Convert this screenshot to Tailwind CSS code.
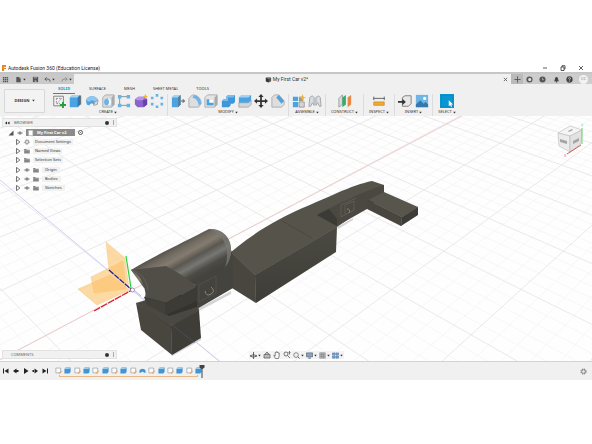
<!DOCTYPE html>
<html lang="en">
<head>
    <meta charset="UTF-8">
    <meta name="viewport" content="width=device-width, initial-scale=1.0">
    <title>Autodesk Fusion 360 (Education License)</title>
    <script src="https://cdn.jsdelivr.net/npm/@tailwindcss/browser@4"></script>
</head>
<body class="bg-white font-['Noto_Sans',sans-serif] text-[4px] leading-[6px] text-[#333]">

<!-- Icon set -->
<svg class="hidden">
    <symbol id="i-sketch" viewBox="0 0 16 16"><path d="M2 2.500h11v11H2z" fill="#f4f4f4" stroke="#777" stroke-width="1"/><path d="M5 5h6M5 5v6h4M11 5L6 11" fill="none" stroke="#888" stroke-dasharray="2 1"/><path d="M12.500 9v7M9 12.500h7" stroke="#23a03a" stroke-width="2.200"/></symbol>
    <symbol id="i-extrude" viewBox="0 0 16 16"><path d="M2 4l3-3h9v11l-3 3H2z" fill="#4da3e0"/><path d="M2 4l3-3h9l-3 3z" fill="#a5d3f3"/><path d="M11 4l3-3v11l-3 3z" fill="#2d78b4"/><path d="M14.500 2v10" stroke="#555"/></symbol>
    <symbol id="i-revolve" viewBox="0 0 16 16"><path d="M1 7C3 1 13 1 15 7l-1 5-4 1c0-3-4-3-5 0l-3-1z" fill="#4da3e0"/><path d="M1 7C3 1 13 1 15 7l-4 2c-1-2-5-2-6 0z" fill="#8cc8f0"/><path d="M11 9l4-2-1 5-4 1z" fill="#d8d8d8" stroke="#888" stroke-width=".6"/></symbol>
    <symbol id="i-hole" viewBox="0 0 16 16"><path d="M2 4l3-3h10v11l-3 3H2z" fill="#dcdcdc" stroke="#999" stroke-width=".8"/><path d="M12 4l3-3v11l-3 3z" fill="#aaa"/><circle cx="7.500" cy="9" r="4" fill="#6db5e8"/><path d="M7.500 5a4 4 0 010 8 6 6 0 000-8" fill="#fff"/></symbol>
    <symbol id="i-pattern" viewBox="0 0 16 16"><path d="M3 3h10M3 3v10h10" fill="none" stroke="#888" stroke-width="1"/><path d="M1 1h4v4H1zM11 1h4v4h-4zM1 11h4v4H1zM11 11h4v4h-4z" fill="#69b2e4"/></symbol>
    <symbol id="i-form" viewBox="0 0 16 16"><path d="M1 6l4-3h8l2 3v6l-4 3H4l-3-3z" fill="#8c62cb"/><path d="M1 6l4-3h8l-3 4H4z" fill="#b794ea"/><path d="M10 7l5-1v6l-4 3z" fill="#6841a8"/><path d="M13 0l1 2 2 1-2 1-1 2-1-2-2-1 2-1z" fill="#f6b32c"/></symbol>
    <symbol id="i-dots" viewBox="0 0 16 16"><g fill="#69b2e4"><path d="M6.500 0h3v3h-3zM12 3h3v3h-3zM12 10h3v3h-3zM6.500 13h3v3h-3zM1 10h3v3H1zM1 3h3v3H1z"/></g></symbol>
    <symbol id="i-press" viewBox="0 0 16 16"><path d="M1 4l3-3h7v11l-3 3H1z" fill="#4da3e0"/><path d="M1 4l3-3h7L8 4z" fill="#a5d3f3"/><path d="M8 4l3-3v11l-3 3z" fill="#5c7d96"/><path d="M11.500 8H15M13.500 6l2 2-2 2" fill="none" stroke="#333"/></symbol>
    <symbol id="i-fillet" viewBox="0 0 16 16"><path d="M1 5l4-4c6 0 10 4 10 10l-3 4H1z" fill="#dedede" stroke="#999" stroke-width=".8"/><path d="M5 4l2-3c5 1 8 5 8 10l-3 2c0-5-3-8-7-9z" fill="#6db5e8"/></symbol>
    <symbol id="i-shell" viewBox="0 0 16 16"><path d="M1 4l3-3h11v11l-3 3H1z" fill="#e4e4e4" stroke="#999" stroke-width=".8"/><path d="M3 6h8v7H3z" fill="#4da3e0"/><path d="M6 6h5v4H6z" fill="#fff"/><path d="M12 4l3-3v11l-3 3z" fill="#aaa"/></symbol>
    <symbol id="i-combine" viewBox="0 0 16 16"><path d="M1 8l2-2h3V3l2-2h8v8l-2 2h-3v2l-2 2H1z" fill="#3f97da"/><path d="M1 8l2-2h3V3l2-2h8l-2 3H8v4z" fill="#7bbdec"/></symbol>
    <symbol id="i-split" viewBox="0 0 16 16"><path d="M1 10h11l3-3v5l-3 3H1z" fill="#d5d5d5" stroke="#999" stroke-width=".8"/><path d="M1 4l3-3h11v6l-3 3H1z" fill="#4da3e0"/><path d="M1 4l3-3h11l-3 3z" fill="#a5d3f3"/></symbol>
    <symbol id="i-move" viewBox="0 0 16 16"><path d="M8 0l3 3.500H9V7h3.500V5L16 8l-3.500 3V9H9v3.500h2L8 16l-3-3.500h2V9H3.500v2L0 8l3.500-3v2H7V3.500H5z" fill="#333"/></symbol>
    <symbol id="i-chamfer" viewBox="0 0 16 16"><path d="M1 4l3-3h5l6 7v4l-3 3H1z" fill="#dedede" stroke="#999" stroke-width=".8"/><path d="M6 4l3-3 6 7-3 3z" fill="#4da3e0"/></symbol>
    <symbol id="i-component" viewBox="0 0 16 16"><path d="M1 3h6v5H1zM1 9h6v6H1z" fill="#4da3e0"/><path d="M8 9h6v6H8z" fill="#d5d5d5" stroke="#777" stroke-width=".7"/><path d="M8 3h5v5H8z" fill="#999"/><path d="M12 0l1 3 3 1-3 1-1 3-1-3-3-1 3-1z" fill="#f6b32c"/></symbol>
    <symbol id="i-joint" viewBox="0 0 16 16"><path d="M2 4l3-2 2 2v9l-2-3-2 4H1zM9 4l3-2 2 2 1 10h-2l-2-4-2 3z" fill="#d9dde0" stroke="#9aa0a6" stroke-width="1"/></symbol>
    <symbol id="i-construct" viewBox="0 0 16 16"><path d="M1 5l4-4v11l-4 3z" fill="#ddd" stroke="#888" stroke-width=".8"/><path d="M5 4l4-3v11l-4 3z" fill="#35ac68"/><path d="M11 4l4-3v11l-4 3z" fill="#e98742"/></symbol>
    <symbol id="i-inspect" viewBox="0 0 16 16"><path d="M2 3v4M14 3v4M2 5h12" stroke="#555" stroke-width="1"/><path d="M2 9h12v4H2z" fill="#f3a72f" stroke="#b57a1c" stroke-width=".6"/></symbol>
    <symbol id="i-insert" viewBox="0 0 16 16"><path d="M5 4l3-2h7v9l-3 3H5z" fill="#e8e8e8" stroke="#777" stroke-width="1"/><path d="M0 8h5V5.500L9 9l-4 3.500V10H0z" fill="#333"/></symbol>
    <symbol id="i-image" viewBox="0 0 16 16"><path d="M1 1h14v14H1z" fill="#6fb6e8"/><path d="M1 12l5-5 4 4 2-2 3 3v3H1z" fill="#3379ad"/><circle cx="11" cy="5" r="1.800" fill="#fff"/></symbol>
    <symbol id="i-select" viewBox="0 0 16 16"><path d="M0 0h16v16H0z" fill="#0a96d2"/><path d="M1.500 1.500h13v13h-13z" fill="none" stroke="#0b7fb5" stroke-width=".8" stroke-dasharray="2 1"/><path d="M10 7v7l1.600-1.500 1 2.300 1.200-.6-1-2.200H15z" fill="#fff"/></symbol>
    <symbol id="i-grid" viewBox="0 0 8 8"><path d="M1 1h1.600v1.600H1zM3.200 1h1.600v1.600H3.200zM5.400 1H7v1.600H5.400zM1 3.200h1.600v1.600H1zM3.200 3.200h1.600v1.600H3.200zM5.400 3.200H7v1.600H5.400zM1 5.400h1.600V7H1zM3.200 5.400h1.600V7H3.200zM5.400 5.400H7V7H5.400z" fill="#555"/></symbol>
    <symbol id="i-file" viewBox="0 0 8 8"><path d="M1.500 1H5l1.500 1.500V7h-5z" fill="#555"/><path d="M5 1v1.500h1.500" stroke="#ccc" stroke-width=".5" fill="none"/></symbol>
    <symbol id="i-save" viewBox="0 0 8 8"><path d="M1 1h6v6H1z" fill="#555"/><path d="M2.300 1.700h3.400v1H2.300zM3 5h2v1.500H3z" fill="#c8c8c8"/></symbol>
    <symbol id="i-undo" viewBox="0 0 8 8"><path d="M3 1.500L1 3.500l2 2M1 3.500h3.500Q7 3.500 7 6.500" fill="none" stroke="#555"/></symbol>
    <symbol id="i-redo" viewBox="0 0 8 8"><path d="M5 1.500l2 2-2 2M7 3.500H3.500Q1 3.500 1 6.500" fill="none" stroke="#888"/></symbol>
    <symbol id="i-cube" viewBox="0 0 8 8"><path d="M1 2l3-1 3 1v4L4 7.500 1 6z" fill="#555"/><path d="M1 2l3 1v4.500L1 6z" fill="#333"/><path d="M1 2l3-1 3 1-3 1z" fill="#999"/></symbol>
    <symbol id="i-eye" viewBox="0 0 8 8"><path d="M.6 4q3.400-4 6.800 0-3.400 4-6.800 0z" fill="#e6e6e6" stroke="#777" stroke-width=".8"/><circle cx="4" cy="4" r="1.200" fill="#666"/></symbol>
    <symbol id="i-folder" viewBox="0 0 8 8"><path d="M.2 1.200h2.700l.8 1h4v5h-7.500z" fill="#858585"/><path d="M.2 3.500h7.500" stroke="#c4c4c4" stroke-width=".5"/></symbol>
    <symbol id="i-gear" viewBox="0 0 8 8"><circle cx="4" cy="4" r="2.900" fill="none" stroke="#777" stroke-width="1.200" stroke-dasharray="1.400 .9"/><circle cx="4" cy="4" r="2" fill="none" stroke="#777" stroke-width=".9"/></symbol>
    <symbol id="i-arrow" viewBox="0 0 8 8"><path d="M2 .5L6.500 4 2 7.500z" fill="#fff" stroke="#444" stroke-width="1"/></symbol>
    <symbol id="i-caret" viewBox="0 0 4 4"><path d="M.3 1h3.400L2 3.400z" fill="#333"/></symbol>
    <symbol id="t-sketch" viewBox="0 0 8 8"><path d="M1 1.200h5.500v5.500H1z" fill="#fbfbfb" stroke="#8a9299" stroke-width=".7"/><path d="M4.500 7.500l3-3" stroke="#eda24f" stroke-width="1.200"/></symbol>
    <symbol id="t-extrude" viewBox="0 0 8 8"><path d="M.5 2.200L2 .7h5.500v5L6 7.300H.5z" fill="#4095d2"/><path d="M.5 2.200L2 .7h5.500L6 2.200z" fill="#9fcdf0"/></symbol>
    <symbol id="t-revolve" viewBox="0 0 8 8"><path d="M.5 4.500C1 1 7 1 7.500 4.500v2h-2c0-1.500-3-1.500-3 0h-2z" fill="#4095d2"/></symbol>
</svg>

<div class="flex min-h-screen flex-col py-16">

    <!-- Title bar -->
    <header class="flex h-2 items-center justify-between pr-2 pl-px">
        <div class="flex items-center gap-px">
            <svg class="size-[6px]" viewBox="0 0 6 6"><path d="M1 0h4v2H3v1h2v1H3v2H1z" fill="#e8862d"/></svg>
            <h1 class="font-[Roboto,sans-serif] text-[5px] text-[#222]">Autodesk Fusion 360 (Education License)</h1>
        </div>
        <div class="flex gap-3">
            <button aria-label="Minimize"><svg class="size-[6px]" viewBox="0 0 6 6"><path d="M1 3h4" stroke="#333" stroke-width=".8"/></svg></button>
            <button aria-label="Restore"><svg class="size-[6px]" viewBox="0 0 6 6"><path d="M1 2h3v3.500H1zM2 2V.7h3V4H4" fill="none" stroke="#333" stroke-width=".8"/></svg></button>
            <button aria-label="Close"><svg class="size-[6px]" viewBox="0 0 6 6"><path d="M1 1l4 4M5 1L1 5" stroke="#333" stroke-width=".8"/></svg></button>
        </div>
    </header>

    <!-- Quick access and document tab -->
    <div class="flex h-3 border-t-2 border-[#c6c6c6] bg-[#f0f0f0]">
        <div class="flex w-[74px] items-center justify-between bg-[#c9c9c9] px-[2px]">
            <button aria-label="Data panel"><svg class="size-[7px]"><use href="#i-grid"/></svg></button>
            <button class="flex items-center gap-px" aria-label="File"><svg class="size-[7px]"><use href="#i-file"/></svg><svg class="size-[3px]"><use href="#i-caret"/></svg></button>
            <button aria-label="Save"><svg class="size-[7px]"><use href="#i-save"/></svg></button>
            <button class="flex items-center gap-px" aria-label="Undo"><svg class="size-[7px]"><use href="#i-undo"/></svg><svg class="size-[3px]"><use href="#i-caret"/></svg></button>
            <button class="flex items-center gap-px" aria-label="Redo"><svg class="size-[7px]"><use href="#i-redo"/></svg><svg class="size-[3px]"><use href="#i-caret"/></svg></button>
        </div>
        <div class="flex flex-1 items-center justify-center gap-px">
            <svg class="size-[7px]"><use href="#i-cube"/></svg>
            <h2 class="font-[Roboto,sans-serif] text-[5px]">My First Car v2*</h2>
        </div>
        <button class="w-3" aria-label="Close tab"><svg class="m-auto size-[5px]" viewBox="0 0 6 6"><path d="M1 1l4 4M5 1L1 5" stroke="#555"/></svg></button>
        <button class="w-3 bg-[#bababa]" aria-label="New tab"><svg class="m-auto size-[7px]" viewBox="0 0 8 8"><path d="M4 .5v7M.5 4h7" stroke="#555"/></svg></button>
        <div class="flex w-[69px] items-center justify-between bg-[#cdcdcd] pr-1 pl-[3px]">
            <button aria-label="Extensions"><svg class="size-[7px]" viewBox="0 0 8 8"><circle cx="4" cy="4" r="3.500" fill="#555"/><path d="M2.500 3L4.500 2 6 3v2L4.500 6l-2-1z" fill="#ddd"/></svg></button>
            <button aria-label="Job status"><svg class="size-[7px]" viewBox="0 0 8 8"><circle cx="4" cy="4" r="3.500" fill="#555"/><path d="M4 2v2.200h1.800" fill="none" stroke="#ccc" stroke-width=".7"/></svg></button>
            <button aria-label="Notifications"><svg class="size-[7px]" viewBox="0 0 8 8"><path d="M1 6q1.200-1 1.200-3a1.800 1.800 0 013.600 0q0 2 1.200 3z" fill="#444"/><circle cx="4" cy="6.700" r=".9" fill="#444"/></svg></button>
            <button aria-label="Help"><svg class="size-[7px]" viewBox="0 0 8 8"><circle cx="4" cy="4" r="3.600" fill="#444"/><path d="M2.900 3q0-1.100 1.100-1.100T5.100 3Q5.100 3.600 4 4.200v.6M4 5.400v.9" fill="none" stroke="#eee" stroke-width=".8"/></svg></button>
            <button class="size-[9px] rounded-full bg-[#f2f2f2] text-center text-[#777]">CC</button>
        </div>
    </div>

    <!-- Ribbon -->
    <div class="flex h-8 bg-[#f0f0f0]">
        <div class="flex w-[49px] items-center px-1">
            <button class="mt-px flex h-6 w-full items-center justify-center gap-[2px] rounded-[1px] border border-[#d8d8d8] bg-[#f3f3f3] font-bold">DESIGN <svg class="size-[3px]"><use href="#i-caret"/></svg></button>
        </div>
        <div class="flex flex-1 flex-col">
            <nav class="flex h-[10px] items-end gap-[18px] pl-1">
                <a href="#" class="-mr-1 border-b border-[#0a96d2] px-[5px] pb-px font-bold text-[#0a96d2]">SOLID</a>
                <a href="#" class="pb-[2px]">SURFACE</a>
                <a href="#" class="pb-[2px]">MESH</a>
                <a href="#" class="pb-[2px]">SHEET METAL</a>
                <a href="#" class="pb-[2px]">TOOLS</a>
            </nav>
            <div class="flex h-[22px]">
                <section class="flex w-[119px] flex-col justify-between border-r border-[#dcdcdc] px-[3px] pb-px">
                    <div class="flex justify-between">
                        <button aria-label="Create sketch"><svg class="size-[14px]"><use href="#i-sketch"/></svg></button>
                        <button aria-label="Extrude"><svg class="size-[14px]"><use href="#i-extrude"/></svg></button>
                        <button aria-label="Revolve"><svg class="size-[14px]"><use href="#i-revolve"/></svg></button>
                        <button aria-label="Hole"><svg class="size-[14px]"><use href="#i-hole"/></svg></button>
                        <button aria-label="Rectangular pattern"><svg class="size-[14px]"><use href="#i-pattern"/></svg></button>
                        <button aria-label="Create form"><svg class="size-[14px]"><use href="#i-form"/></svg></button>
                        <button aria-label="Circular pattern"><svg class="size-[14px]"><use href="#i-dots"/></svg></button>
                    </div>
                    <button class="flex items-center justify-center gap-px">CREATE <svg class="size-[3px]"><use href="#i-caret"/></svg></button>
                </section>
                <section class="flex w-[121px] flex-col justify-between border-r border-[#dcdcdc] px-[3px] pb-px">
                    <div class="flex justify-between">
                        <button aria-label="Press pull"><svg class="size-[14px]"><use href="#i-press"/></svg></button>
                        <button aria-label="Fillet"><svg class="size-[14px]"><use href="#i-fillet"/></svg></button>
                        <button aria-label="Shell"><svg class="size-[14px]"><use href="#i-shell"/></svg></button>
                        <button aria-label="Combine"><svg class="size-[14px]"><use href="#i-combine"/></svg></button>
                        <button aria-label="Split body"><svg class="size-[14px]"><use href="#i-split"/></svg></button>
                        <button aria-label="Move"><svg class="size-[14px]"><use href="#i-move"/></svg></button>
                        <button aria-label="Chamfer"><svg class="size-[14px]"><use href="#i-chamfer"/></svg></button>
                    </div>
                    <button class="flex items-center justify-center gap-px">MODIFY <svg class="size-[3px]"><use href="#i-caret"/></svg></button>
                </section>
                <section class="flex w-[37px] flex-col justify-between border-r border-[#dcdcdc] px-[3px] pb-px">
                    <div class="flex justify-between">
                        <button aria-label="New component"><svg class="size-[14px]"><use href="#i-component"/></svg></button>
                        <button aria-label="Joint"><svg class="size-[14px]"><use href="#i-joint"/></svg></button>
                    </div>
                    <button class="flex items-center justify-center gap-px">ASSEMBLE <svg class="size-[3px]"><use href="#i-caret"/></svg></button>
                </section>
                <section class="flex w-[38px] flex-col items-center justify-between border-r border-[#dcdcdc] pb-px">
                    <button aria-label="Offset plane"><svg class="size-[14px]"><use href="#i-construct"/></svg></button>
                    <button class="flex items-center justify-center gap-px">CONSTRUCT <svg class="size-[3px]"><use href="#i-caret"/></svg></button>
                </section>
                <section class="flex w-[31px] flex-col items-center justify-between border-r border-[#dcdcdc] pb-px">
                    <button aria-label="Measure"><svg class="size-[14px]"><use href="#i-inspect"/></svg></button>
                    <button class="flex items-center justify-center gap-px">INSPECT <svg class="size-[3px]"><use href="#i-caret"/></svg></button>
                </section>
                <section class="flex w-[38px] flex-col justify-between border-r border-[#dcdcdc] px-[3px] pb-px">
                    <div class="flex justify-between">
                        <button aria-label="Insert derive"><svg class="size-[14px]"><use href="#i-insert"/></svg></button>
                        <button aria-label="Canvas"><svg class="size-[14px]"><use href="#i-image"/></svg></button>
                    </div>
                    <button class="flex items-center justify-center gap-px">INSERT <svg class="size-[3px]"><use href="#i-caret"/></svg></button>
                </section>
                <section class="flex w-[28px] flex-col items-center justify-between pb-px">
                    <button aria-label="Select"><svg class="size-[14px]"><use href="#i-select"/></svg></button>
                    <button class="flex items-center justify-center gap-px">SELECT <svg class="size-[3px]"><use href="#i-caret"/></svg></button>
                </section>
            </div>
        </div>
    </div>

    <!-- Viewport -->
    <main class="relative flex min-h-[200px] flex-1 flex-col justify-between overflow-hidden bg-[#fefefe]">
        <svg class="absolute inset-0 size-full" viewBox="0 116 592 245" preserveAspectRatio="xMidYMid slice">
            <defs>
                <linearGradient id="tube" gradientUnits="userSpaceOnUse" x1="168" y1="246" x2="189" y2="284">
                    <stop offset="0" stop-color="#4b4944"/><stop offset=".2" stop-color="#706a61"/><stop offset=".36" stop-color="#857c70"/>
                    <stop offset=".52" stop-color="#5a5751"/><stop offset=".68" stop-color="#777773"/><stop offset=".85" stop-color="#4d4b45"/><stop offset="1" stop-color="#45433d"/>
                </linearGradient>
                <linearGradient id="front" x1="0" y1="0" x2="0" y2="1"><stop offset="0" stop-color="#4b4942"/><stop offset="1" stop-color="#3e3d37"/></linearGradient>
            </defs>
            <path id="grid-minor" fill="none" stroke="#f4f4f5" stroke-width=".7"/>
            <path id="grid-major" fill="none" stroke="#e3e3e5" stroke-width=".8"/>
            <path d="M0 359.500L132 290 462 116" fill="none" stroke="#efc2c2" stroke-width=".8"/>
            <path d="M0 180L132 290l87 71" fill="none" stroke="#c4c4ee" stroke-width=".8"/>

            <!-- origin planes -->
            <g fill="#fbc267" fill-opacity=".6" stroke="#f3c680" stroke-width=".4">
                <path d="M106 242l19 16 4 30-20-18z"/>
                <path d="M91 277l32-16 3 28-32 4z"/>
                <path d="M78 289l32-14 20 15-33 15z"/>
            </g>
            <path d="M94 311l38-21" stroke="#d8232f" stroke-width="1.200" stroke-dasharray="7 1"/>
            <path d="M109 270l23 20" stroke="#1c1c9a" stroke-width="1.200" stroke-dasharray="6 1"/>
            <path d="M126 256l5 32" stroke="#1fd233" stroke-width="1.200"/>

            <!-- ground shadow -->
            <path d="M197 309l34-18v3l-34 18zM171 355l30-17v2l-29 16zM337 227l16-9v2l-15 9z" fill="#d4d4d6"/>

            <!-- car body -->
            <path d="M231 252C250 236 262 229 278 220 300 208 318 202 337 193 351 187 362 183 372 181l12 4v8l-17 13-30 21-82 48z" fill="#55534a"/>
            <path d="M317 215c16-9 30-15 45-22 8-3 15-6 22-8v8l-17 16-30 17z" fill="#4a4841"/>
            <path d="M317 215l20 11v-7l-8-10z" fill="#3b3a34"/>
            <path d="M231 252l24 23 1 28-24-15z" fill="#48463f"/>
            <path d="M255 275l82-48-1 25-80 51z" fill="url(#front)"/>
            <path d="M282 221l30 17M231 252l24 23 82-48M255 275l1 27" fill="none" stroke="#3f3d37" stroke-width=".5"/>
            <path d="M341 205l15-7M341 205v12l13-7v-9l-9 4v9" fill="none" stroke="#66645c" stroke-width=".7"/>
            <path d="M347 209q4 0 2 4" fill="none" stroke="#8b8981" stroke-width=".9"/>

            <!-- rear wing -->
            <path d="M368 200l16-8 34 15-16 10z" fill="#57554c"/>
            <path d="M368 200l34 17-1 9-34-17z" fill="#48463f"/>
            <path d="M402 217l16-10v8l-17 11z" fill="#3d3c36"/>
            <path d="M368 200l34 17 16-10M402 217l-1 9" fill="none" stroke="#3f3d37" stroke-width=".5"/>

            <!-- side wall and tube -->
            <path d="M195 284l33-22 4-12 1 38-36 21z" fill="#45433d"/>
            <path d="M131 270C152 257 188 240 209 229c13-1 22 9 22 20 0 8-2 14-6 18l-29 17-30 8-22-4z" fill="url(#tube)"/>
            <path d="M209 229c13-1 22 9 22 20 0 8-2 14-6 18 4-11 3-29-12-36z" fill="#7a7973" fill-opacity=".75"/>
            <path d="M199 285l17-9v17l-17 9z" fill="none" stroke="#5f5d55" stroke-width=".5"/>
            <path d="M205 291q1 6 6 3t0-7" fill="none" stroke="#8b8981" stroke-width=".9"/>

            <!-- nose -->
            <path d="M136 303l10-3h50l3 10-28 18z" fill="#4a4841"/>
            <path d="M136 303l35 24 1 28-31-25z" fill="#48463f"/>
            <path d="M171 327l28-17 2 28-29 17z" fill="#3e3d37"/>
            <path d="M136 303l35 24 28-17M171 327l1 27" fill="none" stroke="#3a3932" stroke-width=".5"/>
            <path d="M145 298l2-10 50 10v9l-28 9z" fill="#34332e"/>
            <path d="M131 270c8 3 14 13 15 28l20 5 31-17-17-12-14-8z" fill="#504e47"/>
            <path d="M144 297l22 6v12l-19-10z" fill="#42403a"/>
            <path d="M166 303l31-17v15l-31 14z" fill="#3c3b35"/>
            <path d="M144 297l22 6 31-17M166 303v12" fill="none" stroke="#37362f" stroke-width=".5"/>
            <path d="M171 324l24 19" stroke="#5d5d86" stroke-width=".4"/>
            <path d="M131 270c9 2 16 10 17 20" fill="none" stroke="#77746b" stroke-width=".5"/>
            <circle cx="132.500" cy="290" r="2" fill="#fff" stroke="#666" stroke-width=".6"/>
            <path d="M134 290l7 6" stroke="#8888dd" stroke-width=".6"/>
        </svg>

        <div class="relative flex items-start justify-between pt-[2px] pr-1 pl-[2px]">
            <aside>
                <div class="flex h-[9px] w-[115px] items-center gap-1 border border-[#e2e2e2] bg-[#f1f1f1] px-[2px] text-[#666]">
                    <svg class="h-[4px] w-[5px]" viewBox="0 0 5 4"><path d="M0 2l2-1.500v3zM2.500 2l2-1.500v3z" fill="#222"/></svg>
                    <h3 class="flex-1">BROWSER</h3>
                    <button class="size-[4px] rounded-full bg-[#333]" aria-label="Browser options"></button>
                    <span class="h-[5px] w-px bg-[#aaa]"></span>
                </div>
                <ul class="mt-px flex h-[65px] flex-col justify-between pl-[13px]">
                    <li class="-ml-[7px] flex h-[9px] items-center gap-[3px]">
                        <svg class="size-[6px]" viewBox="0 0 6 6"><path d="M5.500.5v5h-5z" fill="#555"/></svg>
                        <svg class="size-[6px]"><use href="#i-eye"/></svg>
                        <span class="flex h-[7px] w-[49px] items-center gap-[3px] bg-[#8b8b8b] px-[2px] font-bold text-white">
                            <svg class="size-[6px]" viewBox="0 0 6 6"><path d="M.7.5h4v5h-4z" fill="#fff" stroke="#ccc" stroke-width=".5"/></svg>My First Car v2
                        </span>
                        <input type="radio" name="active" checked aria-label="Activate My First Car v2" class="size-[5px] appearance-none rounded-full border border-[#555] bg-[#555] bg-clip-content p-px">
                    </li>
                    <li class="flex h-[9px] items-center gap-[3px]">
                        <svg class="size-[6px]"><use href="#i-arrow"/></svg><svg class="size-[6px]"><use href="#i-gear"/></svg>
                        <span class="bg-[#f1f1f1] px-[2px]">Document Settings</span>
                    </li>
                    <li class="flex h-[9px] items-center gap-[3px]">
                        <svg class="size-[6px]"><use href="#i-arrow"/></svg><svg class="size-[6px]"><use href="#i-folder"/></svg>
                        <span class="bg-[#f1f1f1] px-[2px]">Named Views</span>
                    </li>
                    <li class="flex h-[9px] items-center gap-[3px]">
                        <svg class="size-[6px]"><use href="#i-arrow"/></svg><svg class="size-[6px]"><use href="#i-folder"/></svg>
                        <span class="bg-[#f1f1f1] px-[2px]">Selection Sets</span>
                    </li>
                    <li class="flex h-[9px] items-center gap-[3px]">
                        <svg class="size-[6px]"><use href="#i-arrow"/></svg><svg class="size-[6px]"><use href="#i-eye"/></svg><svg class="size-[6px]"><use href="#i-folder"/></svg>
                        <span class="bg-[#f1f1f1] px-[3px]">Origin</span>
                    </li>
                    <li class="flex h-[9px] items-center gap-[3px]">
                        <svg class="size-[6px]"><use href="#i-arrow"/></svg><svg class="size-[6px]"><use href="#i-eye"/></svg><svg class="size-[6px]"><use href="#i-folder"/></svg>
                        <span class="bg-[#f1f1f1] px-[3px]">Bodies</span>
                    </li>
                    <li class="flex h-[9px] items-center gap-[3px]">
                        <svg class="size-[6px]"><use href="#i-arrow"/></svg><svg class="size-[6px]"><use href="#i-eye"/></svg><svg class="size-[6px]"><use href="#i-folder"/></svg>
                        <span class="bg-[#f1f1f1] px-[3px]">Sketches</span>
                    </li>
                </ul>
            </aside>

            <!-- View cube -->
            <svg class="mt-[6px] h-[36px] w-[32px]" viewBox="0 0 32 36" font-size="4">
                <path d="M2 9l12-7 12 4-12 6z" fill="#f5f5f5" stroke="#bbb" stroke-width=".6"/>
                <path d="M2 9l12 3v16L3 22z" fill="#ececec" stroke="#bbb" stroke-width=".6"/>
                <path d="M14 12l12-6-1 14-11 8z" fill="#e2e2e2" stroke="#bbb" stroke-width=".6"/>
                <path d="M11 30l14-9" stroke="#d45b5b" stroke-width="1"/>
                <path d="M26 20V4" stroke="#72d07a" stroke-width="1"/>
                <path d="M4 15l7 2v3l-7-2zM17 17l6-3v3l-6 3zM12 7l4-2 1 1-4 2z" fill="#a5a5a5"/>
                <text x="8" y="33" fill="#d45b5b">X</text>
                <text x="25" y="3" fill="#72d07a">Y</text>
            </svg>
        </div>

        <div class="relative grid grid-cols-[115px_1fr_115px] items-end gap-2 px-[2px] pb-[2px]">
            <div class="flex h-[9px] items-center gap-1 border border-[#e2e2e2] bg-[#f1f1f1] pr-[2px] pl-2 text-[#666]">
                <h3 class="flex-1">COMMENTS</h3>
                <button class="size-[4px] rounded-full bg-[#333]" aria-label="Comment options"></button>
                <span class="h-[5px] w-px bg-[#aaa]"></span>
            </div>
            <div class="mx-auto flex h-[8px] items-center gap-[2px] bg-[#f3f3f3] px-px">
                <button class="flex items-center gap-px" aria-label="Orbit"><svg class="size-[7px]" viewBox="0 0 8 8"><path d="M4 0v8M0 4.500q4-3 8 0-4 3-8 0z" fill="none" stroke="#555" stroke-width="1"/></svg><svg class="size-[3px]"><use href="#i-caret"/></svg></button>
                <button aria-label="Look at"><svg class="size-[8px]" viewBox="0 0 8 8"><path d="M1 3.500h6V7H1zM2 3l2-2 2 2" fill="#bbb" stroke="#666" stroke-width=".8"/></svg></button>
                <button aria-label="Pan"><svg class="size-[8px]" viewBox="0 0 8 8"><path d="M2.500 7.500L.8 4.500l1.400.4V1.500h1V.8h1v.6h1v.6h1v3l-.8 2.500z" fill="#f8f8f8" stroke="#555" stroke-width=".7"/></svg></button>
                <button aria-label="Zoom"><svg class="size-[8px]" viewBox="0 0 8 8"><circle cx="3" cy="3" r="2" fill="none" stroke="#555" stroke-width=".8"/><path d="M4.500 4.500L7 7M6.500.5v3M5.500 1.500l1-1 1 1" fill="none" stroke="#555" stroke-width=".8"/></svg></button>
                <button class="flex items-center gap-px" aria-label="Fit"><svg class="size-[7px]" viewBox="0 0 8 8"><circle cx="3.500" cy="3.500" r="2.700" fill="#eee" stroke="#666" stroke-width=".8"/><path d="M5.500 5.500L7.500 7.500" stroke="#555" stroke-width="1"/></svg><svg class="size-[3px]"><use href="#i-caret"/></svg></button>
                <button class="flex items-center gap-px" aria-label="Display settings"><svg class="size-[7px]" viewBox="0 0 8 8"><path d="M.5 1h7v4.500h-7z" fill="#7ea6d3" stroke="#555" stroke-width=".7"/><path d="M2.500 7h3" stroke="#555"/></svg><svg class="size-[3px]"><use href="#i-caret"/></svg></button>
                <button class="flex items-center gap-px" aria-label="Grid and snaps"><svg class="size-[7px]" viewBox="0 0 8 8"><path d="M.8.8h6.400v6.400H.8zM3 .8v6.400M5 .8v6.400M.8 3h6.400M.8 5h6.400" fill="#bbb" stroke="#777" stroke-width=".5"/></svg><svg class="size-[3px]"><use href="#i-caret"/></svg></button>
                <button class="flex items-center gap-px" aria-label="Viewports"><svg class="size-[7px]" viewBox="0 0 8 8"><path d="M.5 1h3v2.500h-3zM4.500 1h3v2.500h-3zM.5 4.500h3V7h-3zM4.500 4.500h3V7h-3z" fill="#7ea6d3" stroke="#4d6f99" stroke-width=".6"/></svg><svg class="size-[3px]"><use href="#i-caret"/></svg></button>
            </div>
        </div>
    </main>

    <!-- Timeline -->
    <footer class="flex h-[19px] items-center border-t border-[#d2d2d2] bg-[#f0f0f0] px-[3px]">
        <div class="flex w-[45px] justify-between">
            <button aria-label="To start"><svg class="size-[6px]" viewBox="0 0 6 6"><path d="M0 .5h1v5H0zM5.500.5v5L1.500 3z" fill="#222"/></svg></button>
            <button aria-label="Step back"><svg class="size-[6px]" viewBox="0 0 6 6"><path d="M3.500.5v5L0 3zM3 2h2.500v2H3z" fill="#222"/></svg></button>
            <button aria-label="Play"><svg class="size-[6px]" viewBox="0 0 6 6"><path d="M1 0l4.500 3L1 6z" fill="#222"/></svg></button>
            <button aria-label="Step forward"><svg class="size-[6px]" viewBox="0 0 6 6"><path d="M2.500.5v5L6 3zM.5 2H3v2H.5z" fill="#222"/></svg></button>
            <button aria-label="To end"><svg class="size-[6px]" viewBox="0 0 6 6"><path d="M5 .5h1v5H5zM.5.5v5l4-2.500z" fill="#222"/></svg></button>
        </div>
        <div class="ml-[7px] flex flex-col">
            <div id="features" class="flex h-[9px] w-[147px] items-center justify-between"></div>
            <div class="ml-1 h-[2px] w-[139px] border-x border-b border-[#eab98a]"></div>
        </div>
        <svg class="-ml-[3px] h-[13px] w-[6px]" viewBox="0 0 6 13"><path d="M.5 0h5v2.500L3 4.500.5 2.500zM2.500 4h1v9h-1z" fill="#444"/></svg>
        <button class="ml-auto pr-[2px]" aria-label="Timeline settings"><svg class="size-[7px]"><use href="#i-gear"/></svg></button>
    </footer>
</div>

<script>
    // ground plane: grid units along the two axes projected to the viewport
    function project(u, v) {
        const w = 1 + 0.0841 * u - 0.0834 * v;
        const x = 100 + (244 * u + 146 * v + 96) / w / 3;
        const y = 115 + (-81 * u + 80.8 * v + 525) / w / 3;
        return x.toFixed(1) + ' ' + y.toFixed(1);
    }

    let minor = '';
    let major = '';
    for (let i = -60; i <= 80; i++) {
        const n = i / 5;
        let line = '';
        if (n >= -3 && n <= 14) line += `M${project(n, -12)}L${project(n, 7)}`;
        if (n >= -12 && n <= 7) line += `M${project(-3, n)}L${project(14, n)}`;
        if (i % 5 === 0) major += line;
        else minor += line;
    }
    document.getElementById('grid-minor').setAttribute('d', minor);
    document.getElementById('grid-major').setAttribute('d', major);

    const steps = ['sketch', 'extrude', 'sketch', 'extrude', 'sketch', 'extrude', 'sketch', 'extrude',
        'sketch', 'revolve', 'sketch', 'extrude', 'sketch', 'extrude', 'sketch', 'extrude'];
    document.getElementById('features').innerHTML = steps.map(step =>
        `<button aria-label="${step}"><svg class="size-[7px]"><use href="#t-${step}"/></svg></button>`
    ).join('');
</script>

</body>
</html>
